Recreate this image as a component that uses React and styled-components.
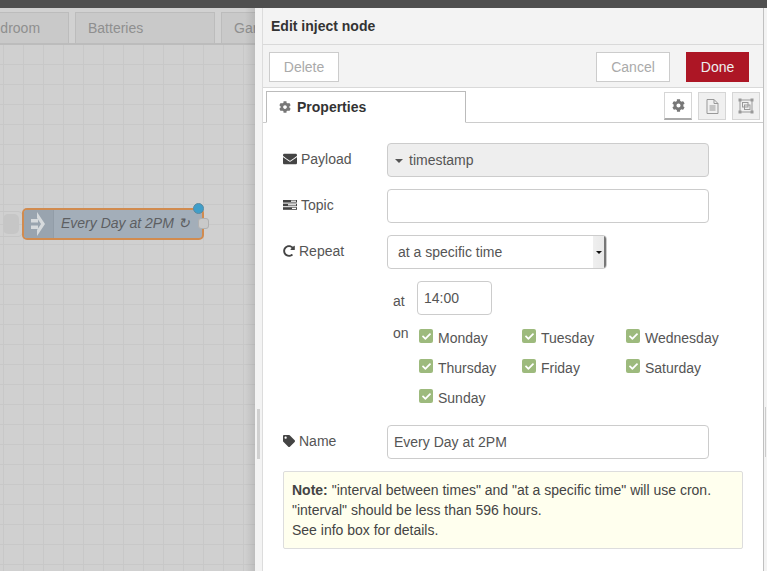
import React from 'react';
import styled, { createGlobalStyle } from 'styled-components';
import { FaEnvelope, FaCog, FaTag, FaRedoAlt, FaCheck } from 'react-icons/fa';

const GlobalStyle = createGlobalStyle`
  html, body {
    margin: 0;
    padding: 0;
    height: 100%;
    overflow: hidden;
    background: #fff;
  }
  * { box-sizing: border-box; }
  body {
    font-family: "Liberation Sans", Arial, sans-serif;
    font-size: 14px;
    color: #555;
  }
`;

const Page = styled.div`
  width: 767px;
  height: 571px;
  display: flex;
  flex-direction: column;
  overflow: hidden;
`;

const TopBar = styled.div`
  height: 8px;
  flex: none;
  background: #4f4f4f;
`;

const Main = styled.div`
  flex: 1;
  display: flex;
  min-height: 0;
`;

const Workspace = styled.div`
  width: 255px;
  flex: none;
  display: flex;
  flex-direction: column;
  position: relative;
  overflow: hidden;
`;

const TabBar = styled.div`
  height: 37px;
  flex: none;
  display: flex;
  gap: 6px;
  padding-top: 4px;
  margin-left: -71px;
  background: #d1d1d1;
  border-bottom: 2px solid #bcbcbc;
`;

const SheetTab = styled.div`
  width: 140px;
  flex: none;
  padding: 7px 0 0 12px;
  background: #c9c9c9;
  border: 1px solid #bcbcbc;
  border-bottom: none;
  color: #8f8f8f;
  white-space: nowrap;
  overflow: hidden;
`;

const Canvas = styled.div`
  flex: 1;
  position: relative;
  background-color: #d0d0d0;
  background-image:
    linear-gradient(to right, #c8c8c8 1px, transparent 1px),
    linear-gradient(to bottom, #c8c8c8 1px, transparent 1px);
  background-size: 20px 20px;
  background-position: 3px 19px;
`;

const Shade = styled.div`
  position: absolute;
  top: 0;
  right: 0;
  bottom: 0;
  width: 10px;
  background: linear-gradient(to right, rgba(0, 0, 0, 0), rgba(0, 0, 0, 0.09));
  pointer-events: none;
`;

const GhostNode = styled.div`
  position: absolute;
  left: 3px;
  top: 169px;
  width: 16px;
  height: 20px;
  border-radius: 5px;
  background: #c6c6c6;
`;

const GhostLink = styled.div`
  position: absolute;
  left: -6px;
  top: 166px;
  width: 29px;
  height: 26px;
  border-radius: 5px;
  border: 1px solid #c6c6c6;
`;

const FlowNode = styled.div`
  position: absolute;
  left: 22px;
  top: 163px;
  width: 182px;
  height: 32px;
  display: flex;
  border: 2px solid #d18b4f;
  border-radius: 5px;
  background: #a3aeb9;
`;

const NodeIcon = styled.div`
  width: 30px;
  flex: none;
  display: flex;
  align-items: center;
  justify-content: center;
  background: #99a4af;
  border-right: 1px solid #929da8;
  border-radius: 3px 0 0 3px;
`;

const NodeLabel = styled.div`
  padding-left: 7px;
  font-style: italic;
  line-height: 26px;
  color: #5d5f62;
  white-space: nowrap;
`;

const NodePort = styled.div`
  position: absolute;
  right: -7px;
  top: 8px;
  width: 11px;
  height: 11px;
  border-radius: 3px;
  background: #c9c9c9;
  border: 1px solid #b0b0b0;
`;

const NodeBadge = styled.div`
  position: absolute;
  right: -2px;
  top: -7px;
  width: 11px;
  height: 11px;
  border-radius: 50%;
  background: #3f9ec9;
  border: 1px solid #5b8aa0;
`;

const Tray = styled.div`
  flex: 1;
  display: flex;
  flex-direction: column;
  position: relative;
  background: #fff;
  border-left: 7px solid #f3f3f3;
  padding-left: 1px;
  border-right: 1px solid #c0c0c0;
  margin-right: 3px;
  box-shadow: 3px 0 0 #f3f3f3, inset 1px 0 0 #dcdcdc;
`;

const TrayTitle = styled.div`
  height: 37px;
  flex: none;
  padding: 10px 0 0 8px;
  background: #f3f3f3;
  border-bottom: 1px solid #d9d9d9;
  font-weight: bold;
  color: #333;
`;

const TrayActions = styled.div`
  height: 43px;
  flex: none;
  display: flex;
  align-items: flex-start;
  gap: 16px;
  padding: 7px 14px 0 6px;
  background: #f3f3f3;
  border-bottom: 1px solid #d9d9d9;
`;

const ActionButton = styled.div`
  height: 30px;
  width: ${(p) => p.$width}px;
  display: flex;
  align-items: center;
  justify-content: center;
  background: ${(p) => (p.$primary ? '#ad1625' : '#fff')};
  border: 1px solid ${(p) => (p.$primary ? '#ad1625' : '#cccccc')};
  color: ${(p) => (p.$primary ? '#eeeeee' : '#aaaaaa')};
`;

const Spacer = styled.div`
  flex: 1;
`;

const TabRow = styled.div`
  height: 35px;
  flex: none;
  display: flex;
  align-items: flex-start;
  padding: 3px 3px 0 3px;
  border-bottom: 1px solid #cccccc;
`;

const PropTab = styled.div`
  width: 200px;
  height: 32px;
  display: flex;
  align-items: center;
  gap: 6px;
  padding-left: 12px;
  background: #fff;
  border: 1px solid #bbbbbb;
  border-bottom: 1px solid #fff;
  font-weight: bold;
  color: #333;
`;

const TabIcons = styled.div`
  display: flex;
  gap: 6px;
  margin-left: auto;
  margin-top: 1px;
`;

const TabIconButton = styled.div`
  width: 28px;
  height: 28px;
  display: flex;
  align-items: center;
  justify-content: center;
  color: #777;
  background: ${(p) => (p.$active ? '#fff' : '#f0f0f0')};
  border: 1px solid #d6d6d6;
  border-bottom: ${(p) => (p.$active ? '2px solid #aaaaaa' : '1px solid #d6d6d6')};
`;

const Form = styled.div`
  flex: 1;
  display: flex;
  flex-direction: column;
  padding: 20px 0 0 20px;
`;

const Row = styled.div`
  display: flex;
  align-items: flex-start;
  height: 46px;
`;

const Label = styled.div`
  width: 104px;
  flex: none;
  display: flex;
  align-items: center;
  gap: 4px;
  padding-top: 5px;
  height: 27px;
  color: #555;
  svg { color: #444; flex: none; }
`;

const Field = styled.div`
  width: ${(p) => p.$width ?? 322}px;
  height: 34px;
  flex: none;
  display: flex;
  align-items: center;
  padding: 0 6px;
  background: ${(p) => (p.$shaded ? '#eeeeee' : '#fff')};
  border: 1px solid #cccccc;
  border-radius: 4px;
  color: #555;
  white-space: nowrap;
`;

const Caret = styled.span`
  width: 0;
  height: 0;
  margin: 1px 6px 0 1px;
  border-left: 4px solid transparent;
  border-right: 4px solid transparent;
  border-top: 4px solid #555;
`;

const SelectBox = styled.div`
  width: 220px;
  height: 34px;
  flex: none;
  display: flex;
  align-items: center;
  padding-left: 10px;
  background: #fff;
  border: 1px solid #cccccc;
  border-radius: 4px;
  position: relative;
  overflow: hidden;
  white-space: nowrap;
`;

const SelectArrow = styled.div`
  position: absolute;
  right: 0;
  top: 0;
  bottom: 0;
  width: 13px;
  display: flex;
  align-items: center;
  justify-content: center;
  background: linear-gradient(to right, #efefef, #e9e9e9);
  border-right: 2px solid #777;
  &::after {
    content: '';
    border-left: 3px solid transparent;
    border-right: 3px solid transparent;
    border-top: 3px solid #111;
  }
`;

const TimeRow = styled.div`
  display: flex;
  align-items: flex-start;
  padding-left: 110px;
  height: ${(p) => p.$height}px;
`;

const SmallLabel = styled.div`
  width: 24px;
  flex: none;
  padding-top: ${(p) => p.$top}px;
  color: #555;
`;

const DayGrid = styled.div`
  display: grid;
  grid-template-columns: 103px 104px 100px;
  grid-auto-rows: 30px;
  margin: 4px 0 0 2px;
`;

const Day = styled.div`
  display: flex;
  align-items: flex-start;
  gap: 5px;
`;

const Tick = styled.div`
  width: 14px;
  height: 14px;
  flex: none;
  display: flex;
  align-items: center;
  justify-content: center;
  border-radius: 2px;
  background: #9dba7d;
  color: #fff;
`;

const DayName = styled.span`
  margin-top: 1px;
`;

const Note = styled.div`
  width: 460px;
  height: 78px;
  flex: none;
  padding: 8px 8px;
  line-height: 20px;
  background: #ffffee;
  border: 1px solid #dddddd;
  border-radius: 2px;
  color: #444;
  b { color: #444; }
`;

const Handle = styled.div`
  position: absolute;
  left: -5px;
  top: 401px;
  width: 3px;
  height: 50px;
  background: #d0d0d0;
`;

const RightHandle = styled.div`
  position: absolute;
  right: -3px;
  top: 399px;
  width: 1px;
  height: 50px;
  background: #cccccc;
`;

const days = ['Monday', 'Tuesday', 'Wednesday', 'Thursday', 'Friday', 'Saturday', 'Sunday'];

const TopicIcon = () => (
  <svg width="14" height="14" viewBox="0 0 14 14" fill="#444">
    <rect x="0" y="2" width="14" height="2.6" />
    <rect x="0" y="5.6" width="14" height="2.6" />
    <rect x="0" y="9.2" width="14" height="2.6" />
    <rect x="8" y="2.6" width="5" height="1.2" fill="#fff" />
    <rect x="5" y="6.2" width="8" height="1.2" fill="#fff" />
    <rect x="9" y="9.8" width="4" height="1.2" fill="#fff" />
  </svg>
);

const InjectIcon = () => (
  <svg width="16" height="26" viewBox="0 0 16 26" fill="#d6dadd">
    <rect x="0" y="8" width="7" height="3.5" />
    <rect x="0" y="14.5" width="7" height="3.5" />
    <path d="M6 1 L14 13 L6 25 L6 19 L10 13 L6 7 Z" />
  </svg>
);

const DocIcon = () => (
  <svg width="13" height="15" viewBox="0 0 13 15" fill="none" stroke="#999" strokeWidth="1">
    <path d="M1 0.5 H8 L12 4.5 V14.5 H1 Z" />
    <path d="M8 0.5 V4.5 H12" />
    <path d="M3.5 7 H9.5 M3.5 9 H9.5 M3.5 11 H9.5" />
  </svg>
);

const AppearanceIcon = () => (
  <svg width="16" height="16" viewBox="0 0 16 16" fill="none" stroke="#999" strokeWidth="1">
    <rect x="2" y="2" width="12" height="12" />
    <rect x="4.5" y="4.5" width="5.5" height="4.5" />
    <rect x="6.5" y="7" width="5.5" height="4.5" />
    <g fill="#999" stroke="none">
      <rect x="0.5" y="0.5" width="3" height="3" />
      <rect x="12.5" y="0.5" width="3" height="3" />
      <rect x="0.5" y="12.5" width="3" height="3" />
      <rect x="12.5" y="12.5" width="3" height="3" />
    </g>
  </svg>
);

export default function App() {
  return (
    <Page>
      <GlobalStyle />
      <TopBar />
      <Main>
        <Workspace>
          <TabBar>
            <SheetTab>Guest Bedroom</SheetTab>
            <SheetTab>Batteries</SheetTab>
            <SheetTab>Garage</SheetTab>
          </TabBar>
          <Canvas>
            <GhostLink />
            <GhostNode />
            <FlowNode>
              <NodeIcon>
                <InjectIcon />
              </NodeIcon>
              <NodeLabel>Every Day at 2PM ↻</NodeLabel>
              <NodePort />
              <NodeBadge />
            </FlowNode>
          </Canvas>
          <Shade />
        </Workspace>
        <Tray>
          <Handle />
          <RightHandle />
          <TrayTitle>Edit inject node</TrayTitle>
          <TrayActions>
            <ActionButton $width={70}>Delete</ActionButton>
            <Spacer />
            <ActionButton $width={74}>Cancel</ActionButton>
            <ActionButton $width={63} $primary>Done</ActionButton>
          </TrayActions>
          <TabRow>
            <PropTab>
              <FaCog size={12} color="#777" />
              Properties
            </PropTab>
            <TabIcons>
              <TabIconButton $active><FaCog size={13} /></TabIconButton>
              <TabIconButton><DocIcon /></TabIconButton>
              <TabIconButton><AppearanceIcon /></TabIconButton>
            </TabIcons>
          </TabRow>
          <Form>
            <Row>
              <Label><FaEnvelope size={14} />Payload</Label>
              <Field $shaded>
                <Caret />
                timestamp
              </Field>
            </Row>
            <Row>
              <Label><TopicIcon />Topic</Label>
              <Field />
            </Row>
            <Row>
              <Label><FaRedoAlt size={12} />Repeat</Label>
              <SelectBox>
                at a specific time
                <SelectArrow />
              </SelectBox>
            </Row>
            <TimeRow $height={44}>
              <SmallLabel $top={12}>at</SmallLabel>
              <Field $width={75}>14:00</Field>
            </TimeRow>
            <TimeRow $height={100}>
              <SmallLabel $top={0}>on</SmallLabel>
              <DayGrid>
                {days.map((d) => (
                  <Day key={d}>
                    <Tick><FaCheck size={9} /></Tick>
                    <DayName>{d}</DayName>
                  </Day>
                ))}
              </DayGrid>
            </TimeRow>
            <Row>
              <Label><FaTag size={12} />Name</Label>
              <Field>Every Day at 2PM</Field>
            </Row>
            <Note>
              <b>Note:</b> "interval between times" and "at a specific time" will use cron.
              <br />
              "interval" should be less than 596 hours.
              <br />
              See info box for details.
            </Note>
          </Form>
        </Tray>
      </Main>
    </Page>
  );
}
